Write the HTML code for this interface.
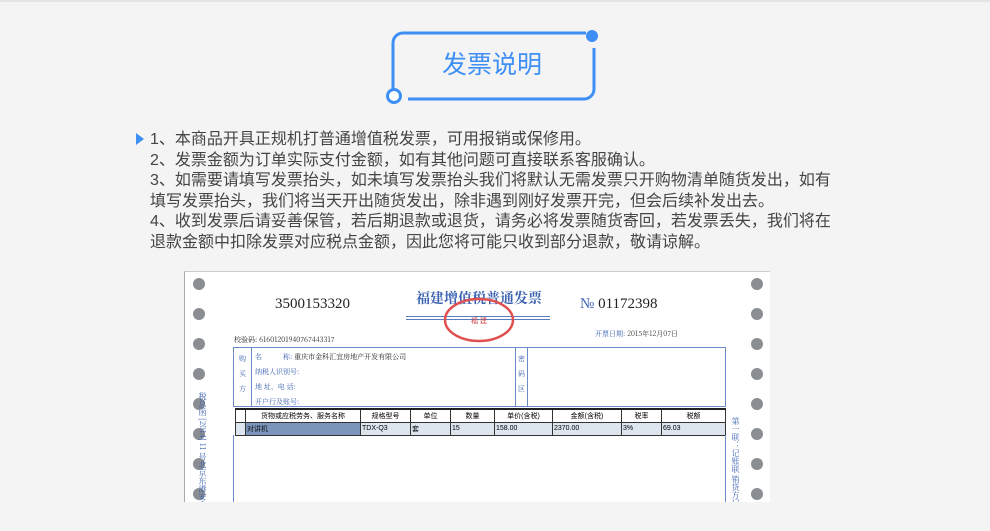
<!DOCTYPE html>
<html><head><meta charset="utf-8"><style>
*{margin:0;padding:0;box-sizing:border-box}
body{width:990px;height:531px;background:#f4f4f4;position:relative;overflow:hidden;font-family:"Liberation Sans","Noto Sans CJK SC",sans-serif}
.abs{position:absolute}
.txt{position:absolute;left:150px;top:130px;font-size:16px;line-height:20.6px;color:#444;white-space:nowrap}
.inv{position:absolute;left:184px;top:271px;width:586px;height:231px;background:#fff;overflow:hidden;border-left:1px solid #aaa;border-top:1px solid #ccc}
.dot{position:absolute;width:12px;height:12px;border-radius:50%;background:#8a8d92}
.s{position:absolute;white-space:nowrap;font-family:"Noto Serif CJK SC","Liberation Serif",serif}
.b{color:#3a62b0}
table{border-collapse:collapse;position:absolute;left:50px;top:136px;font-size:7px}
td{border:1px solid #333;height:13px;padding:0 1px;white-space:nowrap}
</style></head><body>
<div class="abs" style="left:0;top:0;width:990px;height:2px;background:#e4e4e4"></div>
<svg class="abs" style="left:380px;top:25px" width="230" height="85">
<path d="M13,64 V18 A10,10 0 0 1 23,8 H206" fill="none" stroke="#3d8ff5" stroke-width="3"/>
<circle cx="212" cy="11" r="6" fill="#3d8ff5"/>
<path d="M214,23 V64 A10,10 0 0 1 204,74 H28" fill="none" stroke="#3d8ff5" stroke-width="3"/>
<circle cx="14" cy="71" r="6.5" fill="#fff" stroke="#3d8ff5" stroke-width="3"/>
<text x="112" y="48" text-anchor="middle" font-size="25" fill="#3d8ff5" font-family="Noto Sans CJK SC,sans-serif">发票说明</text>
</svg>
<svg class="abs" style="left:135px;top:132px" width="10" height="14"><path d="M1,1 L9,7 L1,13Z" fill="#3d8ff5"/></svg>
<div class="txt">1、本商品开具正规机打普通增值税发票，可用报销或保修用。<br>2、发票金额为订单实际支付金额，如有其他问题可直接联系客服确认。<br>3、如需要请填写发票抬头，如未填写发票抬头我们将默认无需发票只开购物清单随货发出，如有<br>填写发票抬头，我们将当天开出随货发出，除非遇到刚好发票开完，但会后续补发出去。<br>4、收到发票后请妥善保管，若后期退款或退货，请务必将发票随货寄回，若发票丢失，我们将在<br>退款金额中扣除发票对应税点金额，因此您将可能只收到部分退款，敬请谅解。</div>
<div class="inv">
<div class="dot" style="left:8px;top:6px"></div><div class="dot" style="left:8px;top:36px"></div><div class="dot" style="left:8px;top:66px"></div><div class="dot" style="left:8px;top:96px"></div><div class="dot" style="left:8px;top:126px"></div><div class="dot" style="left:8px;top:156px"></div><div class="dot" style="left:8px;top:186px"></div><div class="dot" style="left:8px;top:216px"></div>
<div class="dot" style="left:566px;top:6px"></div><div class="dot" style="left:566px;top:36px"></div><div class="dot" style="left:566px;top:66px"></div><div class="dot" style="left:566px;top:96px"></div><div class="dot" style="left:566px;top:126px"></div><div class="dot" style="left:566px;top:156px"></div><div class="dot" style="left:566px;top:186px"></div><div class="dot" style="left:566px;top:216px"></div>
<div class="s" style="left:90px;top:24px;font-size:15px;font-family:'Liberation Serif',serif;color:#222">3500153320</div>
<div class="s b" style="left:231px;top:16px;font-size:14px;font-weight:bold">福建增值税普通发票</div>
<div class="abs" style="left:221px;top:44px;width:144px;height:4px;border-top:1px solid #5a7cc0;border-bottom:1px solid #5a7cc0"></div>
<svg class="abs" style="left:256px;top:24px" width="76" height="48"><ellipse cx="38" cy="24" rx="34" ry="21" fill="none" stroke="#e05050" stroke-width="2.5"/><text x="38" y="27" text-anchor="middle" font-size="7" fill="#d04040">福 建</text></svg>
<div class="s" style="left:395px;top:24px;font-size:15px;font-family:'Liberation Serif',serif;color:#222"><span class="b">№</span> 01172398</div>
<div class="s" style="left:410px;top:57px;font-size:7px;color:#333"><span class="b">开票日期:</span> 2015年12月07日</div>
<div class="s" style="left:49px;top:63px;font-size:7px;color:#222">校验码: 61601201940767443317</div>
<div class="abs" style="left:48px;top:75px;width:493px;height:60px;border:1px solid #6a8ac8"></div>
<div class="abs" style="left:66px;top:75px;width:1px;height:60px;background:#6a8ac8"></div>
<div class="abs" style="left:330px;top:75px;width:1px;height:60px;background:#6a8ac8"></div>
<div class="abs" style="left:342px;top:75px;width:1px;height:60px;background:#6a8ac8"></div>
<div class="s b" style="left:54px;top:80px;font-size:7px;line-height:15px">购<br>买<br>方</div>
<div class="s b" style="left:70px;top:78px;font-size:7px;line-height:15px">名　　　称: <span style="color:#222">重庆市金科汇宜房地产开发有限公司</span><br>纳税人识别号:<br>地 址、电 话:<br>开户行及账号:</div>
<div class="s b" style="left:333px;top:80px;font-size:7px;line-height:15px">密<br>码<br>区</div>
<div class="s b" style="left:12px;top:120px;font-size:8px;writing-mode:vertical-rl">税总函 [2014] 11 号北京东港安全</div>
<div class="s b" style="left:545px;top:145px;font-size:8px;writing-mode:vertical-rl">第一联：记账联 销货方记账</div>
<table>
<tr style="background:#fff;text-align:center;border-top:2px solid #222"><td style="width:10px"></td><td style="width:115px">货物或应税劳务、服务名称</td><td style="width:50px">规格型号</td><td style="width:40px">单位</td><td style="width:44px">数量</td><td style="width:58px">单价(含税)</td><td style="width:69px">金额(含税)</td><td style="width:40px">税率</td><td style="width:64px">税额</td></tr>
<tr style="background:#dde5ef"><td></td><td style="background:#7a94bc;color:#111">对讲机</td><td>TDX-Q3</td><td>套</td><td>15</td><td>158.00</td><td>2370.00</td><td>3%</td><td>69.03</td></tr>
</table>
<div class="abs" style="left:48px;top:163px;width:1px;height:70px;background:#6a8ac8"></div>
<div class="abs" style="left:540px;top:163px;width:1px;height:70px;background:#6a8ac8"></div>
</div>
</body></html>
